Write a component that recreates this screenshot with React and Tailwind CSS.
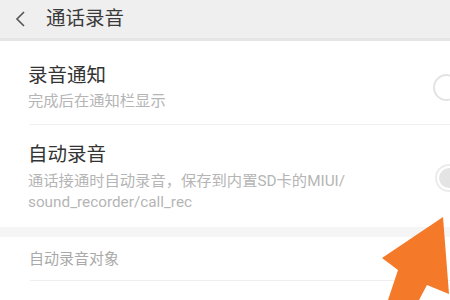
export default function App() {
  const font = { fontFamily: 'Roboto, "Noto Sans CJK SC", sans-serif' };
  return (
    <div className="relative w-[450px] h-[300px] overflow-hidden bg-white" style={font}>
      <header className="flex items-center h-[41px] bg-[#efefef] border-b-[3px] border-[#e5e5e5]">
        <svg width="12" height="18" viewBox="0 0 12 18" className="ml-[14px]">
          <path d="M10 2 L3 9 L10 16" fill="none" stroke="#555" strokeWidth="1.6" />
        </svg>
        <h1 className="ml-[20px] text-[19.5px] leading-[26px] text-[#3a3a3a]">通话录音</h1>
      </header>

      <section className="flex items-center justify-between pl-[28px] pt-[22px] pb-[13px]">
        <div>
          <p className="text-[19.5px] leading-[26px] text-[#333]">录音通知</p>
          <p className="mt-[2px] text-[15.3px] leading-[20px] text-[#b5b5b5]">完成后在通知栏显示</p>
        </div>
        <div className="shrink-0 w-[27px] h-[27px] rounded-full border-2 border-[#e3e3e3] bg-white mr-[-10px]" />
      </section>
      <div className="ml-[30px] h-px bg-[#efefef]" />

      <section className="flex items-center justify-between pl-[28px] pt-[17px] pb-[14px]">
        <div>
          <p className="text-[19.5px] leading-[26px] text-[#333]">自动录音</p>
          <p className="mt-[3px] text-[15.3px] leading-[21px] text-[#b5b5b5]">
            通话接通时自动录音，保存到内置SD卡的MIUI/
            <br />
            sound_recorder/call_rec
          </p>
        </div>
        <div className="shrink-0 flex items-center justify-center w-[28px] h-[28px] rounded-full border-2 border-[#ececec] bg-white mr-[-13px]">
          <div className="w-[20px] h-[20px] rounded-full bg-[#e4e4e4]" />
        </div>
      </section>

      <div className="h-[10px] bg-[#f5f5f5]" />

      <section className="pl-[29px] pt-[12px] pb-[11px]">
        <p className="text-[15px] leading-[20px] text-[#a9a9a9]">自动录音对象</p>
      </section>
      <div className="ml-[30px] h-px bg-[#efefef]" />

      <svg className="pointer-events-none absolute inset-0" width="450" height="300" viewBox="0 0 450 300">
        <polygon
          points="443,217 382,258 398,270 388,300 419,300 427,285 449,294"
          fill="#f47a2a"
        />
      </svg>
    </div>
  );
}
